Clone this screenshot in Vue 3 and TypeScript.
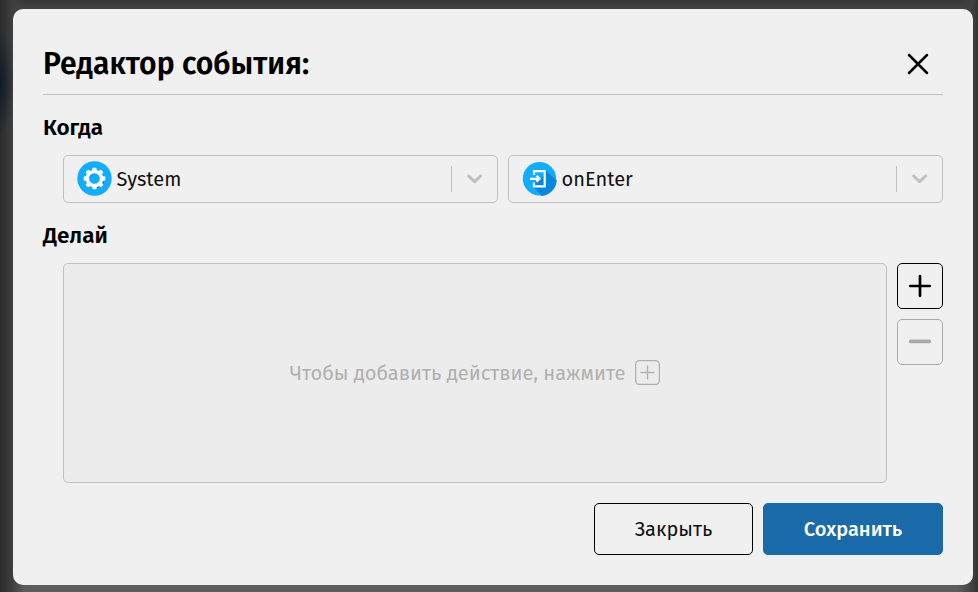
<script setup lang="ts">
import { ref } from 'vue'

interface Choice {
  id: string
  label: string
}

const choices = ref<Choice[]>([
  { id: 'system', label: 'System' },
  { id: 'enter', label: 'onEnter' },
])

const teeth = [0, 45, 90, 135, 180, 225, 270, 315]
</script>

<template>
  <div class="backdrop">
    <section class="modal" role="dialog">
      <header class="head">
        <h1>Редактор события:</h1>
        <svg class="close" width="22" height="22" viewBox="0 0 22 22">
          <path d="M2 2L20 20M20 2L2 20" />
        </svg>
      </header>

      <h2 class="when">Когда</h2>
      <div class="selects">
        <div v-for="c in choices" :key="c.id" class="select">
          <svg v-if="c.id === 'system'" class="icon" width="36" height="36" viewBox="0 0 36 36">
            <circle cx="17.5" cy="17.5" r="17.2" fill="#12adff" />
            <circle cx="18.5" cy="18.5" r="7.4" fill="none" stroke="#0788dc" stroke-width="3.2" />
            <g fill="#fff">
              <rect
                v-for="t in teeth"
                :key="t"
                x="15.3"
                y="6.7"
                width="4.4"
                height="5"
                rx="1.2"
                :transform="`rotate(${t} 17.5 17.5)`"
              />
            </g>
            <circle cx="17.5" cy="17.5" r="7.1" fill="none" stroke="#fff" stroke-width="3.5" />
          </svg>
          <svg v-else class="icon" width="36" height="36" viewBox="0 0 36 36">
            <circle cx="17.5" cy="17.7" r="16.7" fill="#12adff" />
            <path d="M23.8 9.5L34.8 19.5A16.7 16.7 0 0 1 19.5 35L11.5 26V22L19 18Z" fill="#0788dc" />
            <path d="M12 14V10.2H22.7V25.3H12V21.5" fill="none" stroke="#fff" stroke-width="2.2" />
            <path d="M8 17.8H17M14.5 14.8L17.5 17.8L14.5 20.8" fill="none" stroke="#fff" stroke-width="2.2" />
          </svg>
          <span class="label">{{ c.label }}</span>
          <span class="divider"></span>
          <svg class="chevron" width="18" height="12" viewBox="0 0 18 12">
            <path d="M2.6 3L8.6 8.7L14.6 3" />
          </svg>
        </div>
      </div>

      <h2 class="do">Делай</h2>
      <div class="actions">
        <div class="empty">
          <span class="hint">Чтобы добавить действие, нажмите</span>
          <svg class="hint-plus" width="25" height="25" viewBox="0 0 25 25">
            <rect x=".6" y=".6" width="23.8" height="23.8" rx="4" />
            <path d="M6 12.5H19M12.5 6V19" />
          </svg>
        </div>
        <div class="tools">
          <button class="tool" aria-label="Добавить">
            <svg width="24" height="24" viewBox="0 0 24 24"><path d="M2.2 12H21.8M12 2.2V21.8" /></svg>
          </button>
          <button class="tool off" aria-label="Удалить">
            <svg width="24" height="24" viewBox="0 0 24 24"><path d="M2.8 11.4H21.2" /></svg>
          </button>
        </div>
      </div>

      <footer class="foot">
        <button class="btn cancel">Закрыть</button>
        <button class="btn save">Сохранить</button>
      </footer>
    </section>
  </div>
</template>

<style>
body {
  margin: 0;
}
</style>

<style scoped>
* {
  box-sizing: border-box;
}
.backdrop {
  width: 978px;
  height: 592px;
  padding: 9px 5px 7px 13px;
  overflow: hidden;
  font-family: 'Fira Sans', 'Noto Sans', sans-serif;
  background:
    radial-gradient(ellipse 14px 55px at 0 82px, #101c28, transparent),
    linear-gradient(90deg, #2c2c2c 0, #404040 13px, transparent 25px),
    linear-gradient(270deg, #333 0, #414141 6px, transparent 20px),
    linear-gradient(#363636, #434343 9px, #434343 570px, #5d5d5d 586px);
}
.modal {
  height: 576px;
  padding: 30px;
  border-radius: 10px;
  background: #f0f0f0;
  color: #000;
}
.head {
  display: flex;
  justify-content: space-between;
  align-items: flex-start;
  height: 56px;
  padding: 0 14px 0 0;
  border-bottom: 1px solid #c0c0c0;
}
h1,
h2 {
  margin: 0;
  white-space: nowrap;
}
h1 {
  font-size: 30.1px;
  line-height: 50px;
  font-weight: 600;
}
.close {
  margin-top: 14px;
  fill: none;
  stroke: #000;
  stroke-width: 2.5;
  stroke-linecap: round;
}
h2 {
  font-size: 22.5px;
  line-height: 30px;
  font-weight: 600;
}
.when {
  margin-top: 18px;
}
.selects {
  display: flex;
  gap: 10px;
  margin: 12px 0 0 20px;
}
.select {
  display: flex;
  align-items: center;
  flex: 1;
  height: 48px;
  padding: 0 13px;
  border: 1px solid #c0c0c0;
  border-radius: 5px;
}
.icon {
  flex: none;
}
.label {
  flex: 1;
  margin-left: 3.6px;
  font-size: 20px;
  line-height: 28px;
  color: #111;
}
.divider {
  width: 1px;
  height: 26px;
  margin-right: 14px;
  background: #c0c0c0;
}
.chevron {
  fill: none;
  stroke: #c0c0c0;
  stroke-width: 3;
  stroke-linecap: round;
  stroke-linejoin: round;
}
.do {
  margin-top: 18px;
}
.actions {
  display: flex;
  gap: 10px;
  margin: 12px 0 0 20px;
}
.empty {
  display: flex;
  align-items: center;
  justify-content: center;
  gap: 10px;
  flex: 1;
  height: 220px;
  border: 1px solid #c0c0c0;
  border-radius: 5px;
  background: #ececec;
  color: #b0b0b0;
}
.hint {
  font-size: 20px;
  white-space: nowrap;
}
.hint-plus {
  margin-bottom: 2px;
  fill: none;
  stroke: #b0b0b0;
  stroke-width: 1.3;
  stroke-linecap: round;
}
.tools {
  display: flex;
  flex-direction: column;
  gap: 10px;
}
.tool {
  display: grid;
  place-items: center;
  width: 46px;
  height: 46px;
  padding: 0;
  border: 1px solid #000;
  border-radius: 5px;
  background: transparent;
}
.tool path {
  stroke: #000;
  stroke-width: 2.7;
  stroke-linecap: round;
}
.tool.off {
  border-color: #a8a8a8;
}
.tool.off path {
  stroke: #a8a8a8;
  stroke-width: 3.8;
}
.foot {
  display: flex;
  justify-content: flex-end;
  gap: 10px;
  margin-top: 20px;
}
.btn {
  height: 52px;
  padding: 0;
  border: 1px solid #000;
  border-radius: 5px;
  background: transparent;
  font-family: inherit;
  font-size: 20px;
  color: #111;
}
.cancel {
  width: 159px;
}
.save {
  width: 180px;
  border-color: #1a6aaa;
  background: #1a6aaa;
  color: #fff;
  font-weight: 500;
}
</style>
